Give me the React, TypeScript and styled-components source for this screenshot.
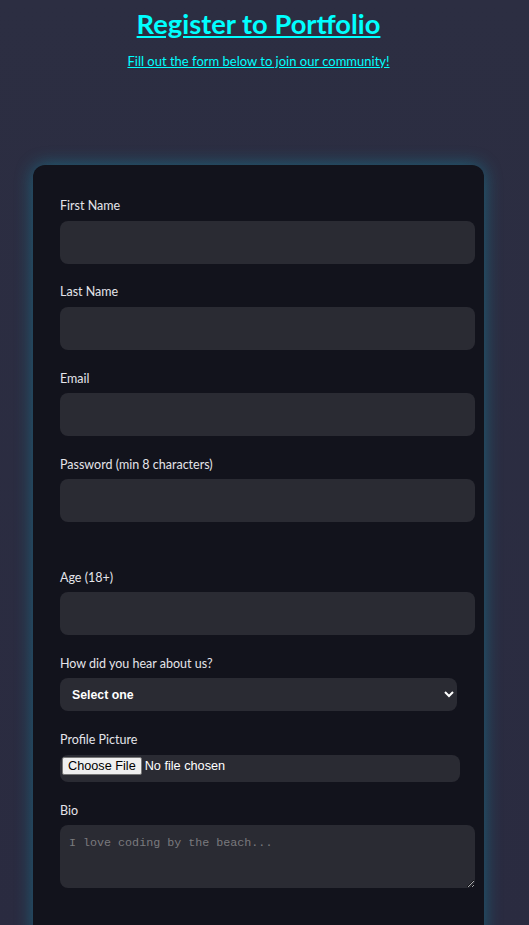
import React from 'react'
import styled, { createGlobalStyle } from 'styled-components'

const GlobalStyle = createGlobalStyle`
  html, body {
    margin: 0;
    padding: 0;
    background: #2b2d42;
  }
  * {
    font-family: Lato, 'Open Sans', sans-serif;
  }
`

const Page = styled.div`
  min-height: 100vh;
  padding: 5px 12px 0 0;
  background: linear-gradient(180deg, #2c2e42 0%, #2a2b40 100%);
  box-sizing: border-box;
`

const Header = styled.header`
  text-align: center;
`

const Title = styled.h1`
  margin: 0;
  font-size: 27.3px;
  line-height: 38px;
  font-weight: 700;
  color: #00ffff;
  text-decoration: underline;
`

const Subtitle = styled.p`
  margin: 9px 0 0;
  font-size: 13px;
  line-height: 18px;
  color: #00ffff;
  text-decoration: underline;
`

const Card = styled.form`
  width: 451px;
  margin: 95px auto 0;
  padding: 32px 27px;
  box-sizing: border-box;
  background: #12131c;
  border-radius: 12px;
  box-shadow: 0 0 18px rgba(0, 200, 230, 0.35);
`

const Field = styled.div<{ $extra?: number }>`
  margin-bottom: ${(p) => 19.8 + (p.$extra ?? 0)}px;
`

const Label = styled.label`
  display: block;
  font-size: 12.5px;
  line-height: 17px;
  margin-bottom: 6.5px;
  color: #e4e4ea;
`

const TextInput = styled.input`
  display: block;
  box-sizing: content-box;
  width: 100%;
  height: 19px;
  padding: 12px 9px;
  border: none;
  border-radius: 8px;
  background: #2a2b33;
  color: #fff;
  font-size: 14px;
  outline: none;
`

const Select = styled.select`
  display: block;
  box-sizing: border-box;
  width: 100%;
  height: 33px;
  padding: 0 8px;
  border: none;
  border-radius: 8px;
  background: #2a2b33;
  color: #fff;
  font-family: 'Liberation Sans', Arial, sans-serif;
  font-size: 12.3px;
  font-weight: 700;
  outline: none;
`

const FileInput = styled.input`
  display: block;
  box-sizing: border-box;
  width: calc(100% + 3px);
  height: 27px;
  padding: 2px;
  border: none;
  border-radius: 8px;
  background: #2a2b33;
  color: #fff;
  font-family: 'Liberation Sans', Arial, sans-serif;
  font-size: 12.7px;

  &::file-selector-button {
    font-family: 'Liberation Sans', Arial, sans-serif;
    font-size: 12.7px;
    background: #efefef;
    color: #000;
    border: 1px solid #767676;
    border-radius: 2px;
    padding: 1px 5px;
    margin-right: 3px;
  }
`

const TextArea = styled.textarea`
  display: block;
  box-sizing: content-box;
  width: 100%;
  height: 47px;
  padding: 10px 9px 6px;
  border: none;
  border-radius: 8px;
  background: #2a2b33;
  color: #fff;
  font-family: 'Liberation Mono', 'DejaVu Sans Mono', monospace;
  font-size: 11.7px;
  line-height: 16px;
  outline: none;

  &::placeholder {
    color: #7a7a7e;
  }
`

export default function App() {
  return (
    <>
      <GlobalStyle />
      <Page>
        <Header>
          <Title>Register to Portfolio</Title>
          <Subtitle>Fill out the form below to join our community!</Subtitle>
        </Header>
        <Card onSubmit={(e) => e.preventDefault()}>
          <Field>
            <Label htmlFor="first">First Name</Label>
            <TextInput id="first" type="text" />
          </Field>
          <Field>
            <Label htmlFor="last">Last Name</Label>
            <TextInput id="last" type="text" />
          </Field>
          <Field>
            <Label htmlFor="email">Email</Label>
            <TextInput id="email" type="email" />
          </Field>
          <Field $extra={26.5}>
            <Label htmlFor="password">Password (min 8 characters)</Label>
            <TextInput id="password" type="password" />
          </Field>
          <Field>
            <Label htmlFor="age">Age (18+)</Label>
            <TextInput id="age" type="number" />
          </Field>
          <Field>
            <Label htmlFor="source">How did you hear about us?</Label>
            <Select id="source" defaultValue="">
              <option value="">Select one</option>
              <option value="friend">Friend</option>
              <option value="search">Search engine</option>
              <option value="social">Social media</option>
            </Select>
          </Field>
          <Field>
            <Label htmlFor="picture">Profile Picture</Label>
            <FileInput id="picture" type="file" />
          </Field>
          <Field>
            <Label htmlFor="bio">Bio</Label>
            <TextArea id="bio" placeholder="I love coding by the beach..." />
          </Field>
        </Card>
      </Page>
    </>
  )
}
